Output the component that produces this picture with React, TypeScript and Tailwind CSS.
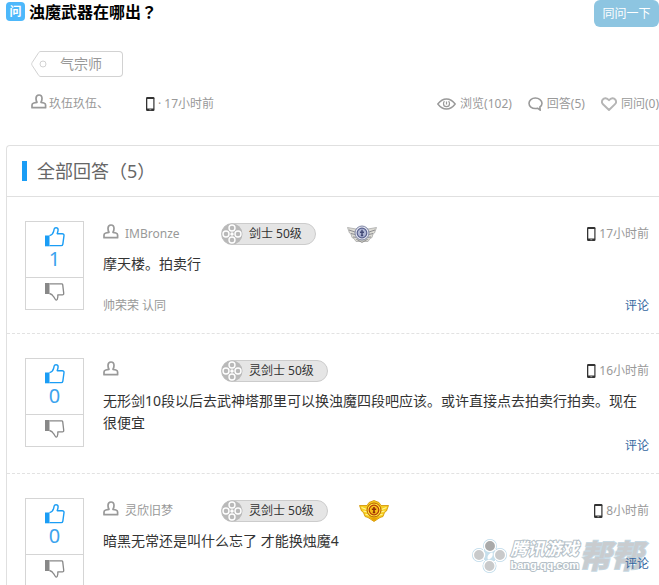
import clsx from 'clsx';

type Medal = 'silver' | 'gold';

interface Answer {
  id: number;
  name: string;
  role: string;
  medal?: Medal;
  time: string;
  votes: number;
  text: string;
  agree?: string;
}

const answers: Answer[] = [
  { id: 1, name: 'IMBronze', role: '剑士 50级', medal: 'silver', time: '17小时前', votes: 1, text: '摩天楼。拍卖行', agree: '帅荣荣 认同' },
  { id: 2, name: '', role: '灵剑士 50级', time: '16小时前', votes: 0, text: '无形剑10段以后去武神塔那里可以换浊魔四段吧应该。或许直接点去拍卖行拍卖。现在很便宜' },
  { id: 3, name: '灵欣旧梦', role: '灵剑士 50级', medal: 'gold', time: '8小时前', votes: 0, text: '暗黑无常还是叫什么忘了 才能换烛魔4' },
];

function UserIcon() {
  return (
    <svg className="h-[15px] w-4 shrink-0" viewBox="0 0 16 15" fill="none" stroke="#999" strokeWidth="1.7" strokeLinejoin="round">
      <path d="M8 1C5.900 1 5 2.400 5 4.400c0 1.700.4 2.900 1 3.900L2.800 9C1.600 9.300 1 10 1 11v2.700h13.600V11c0-1-.6-1.700-1.700-2L10 8.300c.6-1 1-2.200 1-3.900C11 2.400 10.100 1 8 1z" />
    </svg>
  );
}

function PhoneIcon() {
  return (
    <svg className="h-[14px] w-[9px] shrink-0" viewBox="0 0 9 14">
      <rect width="8.500" height="14" rx="1.2" fill="#333" />
      <rect x="1.300" y="2" width="6" height="9.500" fill="#fff" />
      <rect x="3.300" y="12.300" width="2" height="0.900" fill="#aaa" />
    </svg>
  );
}

function EyeIcon() {
  return (
    <svg className="h-3 w-[19px]" viewBox="0 0 19 12" fill="none" stroke="#999" strokeWidth="1.400">
      <path d="M.8 6C3.500 2.500 6.200 1 9.500 1s6 1.500 8.700 5c-2.700 3.500-5.400 5-8.700 5S3.500 9.500.8 6z" />
      <path d="M7.500 3.200C6.800 3.800 6.500 4.700 6.500 5.700c0 1.700 1.300 3 3 3s3-1.300 3-3c0-1-.3-1.900-1-2.500M9.500 3.500v3" strokeWidth="1.200" />
    </svg>
  );
}

function BubbleIcon() {
  return (
    <svg className="h-[14px] w-[15px]" viewBox="0 0 15 14" fill="none" stroke="#999" strokeWidth="1.600" strokeLinejoin="round">
      <path d="M7.300 1C3.800 1 1 3.300 1 6.300s2.800 5.200 6.300 5.200c.8 0 1.500-.1 2.200-.3l2.700 2-.3-3.200c1.300-.9 2.100-2.200 2.100-3.700C14 3.300 10.900 1 7.300 1z" />
    </svg>
  );
}

function HeartIcon() {
  return (
    <svg className="h-[14px] w-4" viewBox="0 0 16 14" fill="none" stroke="#b5b5b5" strokeWidth="1.900" strokeLinejoin="round">
      <path d="M8 13L2 7.200C.8 6 .7 4 1.700 2.600 3 .8 6 .6 8 3.300 10 .6 13 .8 14.300 2.600c1 1.400.9 3.400-.3 4.600L8 13z" />
    </svg>
  );
}

function ThumbUp() {
  return (
    <svg className="h-5 w-5" viewBox="0 0 20 20" fill="none">
      <rect y="8.500" width="4.500" height="10.800" fill="#1a9df5" />
      <path d="M4.500 8.700C7 8 8.300 6.200 8.700 4.200L9.200 1.800C9.400.9 10 .7 11 .7c1.400 0 2.100.8 2.100 2 0 1.500-.5 2.600-.9 4h5c1.200 0 1.900.8 1.800 1.900l-1.200 8.700c-.2 1-.8 1.300-1.600 1.300H4.500" stroke="#1a9df5" strokeWidth="1.400" strokeLinejoin="round" />
    </svg>
  );
}

function ThumbDown() {
  return (
    <svg className="h-[19px] w-5" viewBox="0 0 20 19" fill="none">
      <rect width="4.500" height="11" fill="#888" />
      <path d="M4.500.8h12.200c.6 0 .9.3 1 .8l1 8.600c.1 1.100-.3 1.700-1.300 1.700h-4.600c.2 1.500.1 3.200-.5 4.400-.5 1-1.300 1.100-1.900.2L8.600 13.700C7.700 12.100 6.500 11 4.500 10.500" stroke="#888" strokeWidth="1.300" strokeLinejoin="round" />
    </svg>
  );
}

function RoleIcon() {
  return (
    <svg className="size-[22px] shrink-0" viewBox="0 0 22 22">
      <circle cx="11" cy="11" r="10.500" fill="#b9b9b9" />
      <g fill="#b9b9b9" stroke="#fff" strokeWidth="1.400">
        <circle cx="11" cy="5" r="3" />
        <circle cx="17" cy="11" r="3" />
        <circle cx="11" cy="17" r="3" />
        <circle cx="5" cy="11" r="3" />
      </g>
      <path d="M11 8.500q.5 2 2.500 2.500-2 .5-2.500 2.500-.5-2-2.500-2.500 2-.5 2.500-2.500z" fill="#fff" />
    </svg>
  );
}

function SilverMedal() {
  return (
    <svg className="h-[18px] w-[30px]" viewBox="0 0 30 18" strokeLinejoin="round">
      <path d="M.5 2.500l8.500 1.500h12L29.500 2.500 27.500 8l-1.500 1-1 3.500-2 1-2 3H9l-2-3-2-1-1-3.500L2.500 8z" fill="#dddcd5" stroke="#aaa" strokeWidth=".8" />
      <path d="M2 5l6 2M4 8.500l4 1M6 12l3 .3M28 5l-6 2M26 8.500l-4 1M24 12l-3 .3" stroke="#85858a" strokeWidth=".9" />
      <path d="M9 14l6 3.500 6-3.500" fill="#c9c9bf" stroke="#888" strokeWidth=".8" />
      <circle cx="15" cy="8" r="7" fill="#e4e6ef" stroke="#8087a6" strokeWidth="1" />
      <circle cx="15" cy="8" r="4.800" fill="#b0b7d4" stroke="#58608f" strokeWidth="1.200" />
      <path d="M15 4.800v6.500M13 7.300h4M13.800 10.500h2.400" stroke="#414875" strokeWidth="1.400" />
    </svg>
  );
}

function GoldMedal() {
  return (
    <svg className="h-[22px] w-[30px]" viewBox="0 0 30 22" strokeLinejoin="round">
      <path d="M15 .5l5 2 2 3L29.500 5.500 27.500 11l-2 1.500-1.500 4-3 1-6 4-6-4-3-1-1.500-4-2-1.500L.5 5.500 8 5.500l2-3z" fill="#f8cf20" stroke="#cf8f00" strokeWidth=".8" />
      <path d="M2.500 7.500l5 2M4.500 11l3.500 1M6.500 14.500l4 .5M27.500 7.500l-5 2M25.500 11l-3.500 1M23.500 14.500l-4 .5" stroke="#fff59a" strokeWidth="1.200" />
      <path d="M9 16q6 4 12 0l-6 5.300z" fill="#e8a200" />
      <circle cx="15" cy="10" r="7" fill="#ffe13b" stroke="#b45e00" strokeWidth="1" />
      <circle cx="15" cy="10" r="4.800" fill="#f5bd1a" stroke="#b33909" strokeWidth="1.200" />
      <path d="M15 7v6M12.800 9.300h4.400M13.800 12.500h2.400" stroke="#8e2c05" strokeWidth="1.600" />
    </svg>
  );
}

function Watermark() {
  return (
    <div className="pointer-events-none absolute right-4 bottom-3 flex items-center font-bold text-[#c9cccf] italic">
      <svg className="h-[34px] w-[35px]" viewBox="0 0 35 34">
        <g fill="#fff" stroke="#bcd9e9" strokeWidth="2">
          <circle cx="18" cy="7" r="6" />
          <circle cx="28" cy="16" r="6" />
          <circle cx="17.500" cy="27" r="6" />
          <circle cx="7" cy="16" r="6" />
        </g>
        <path d="M12 9l11 1 5 7-10 10-9-9z" fill="#c6dfec" stroke="#fff" />
        <g fill="#c9cacb" stroke="#fff" strokeWidth="1.300">
          <circle cx="18" cy="7" r="5.600" fill="#aaa" />
          <circle cx="28" cy="16" r="5.600" />
          <circle cx="17.500" cy="27" r="5.600" />
          <circle cx="7" cy="16" r="5.600" />
        </g>
        <path d="M20.500 13.500c1 2.500-.5 6.500-4.500 7-1.500-2.500.5-6.500 4.500-7z" fill="#fff" />
      </svg>
      <div className="ml-1 text-white [-webkit-text-stroke:2px_#b4bfc7] [paint-order:stroke_fill]">
        <div className="text-[17px] leading-[18px]">腾讯游戏</div>
        <div className="font-['Liberation_Sans',sans-serif] text-[11px] leading-[14px] not-italic">bang.qq.com</div>
      </div>
      <div className="text-[32px] leading-8 [-webkit-text-stroke:2px_#c5d8e3] [paint-order:stroke_fill]">帮帮</div>
    </div>
  );
}

function AnswerItem({ answer }: { answer: Answer }) {
  return (
    <li className="flex gap-[19px] border-b border-dashed border-[#e2e2e2] pt-6 pr-[10px] pb-[17px] pl-[18px]">
      <div className="w-[59px] shrink-0 self-start border border-[#d5d5d5]">
        <button type="button" className="flex h-14 w-full flex-col items-center border-b border-[#d5d5d5] pt-[5px] text-xl leading-6 text-[#3ba3ee]">
          <ThumbUp />
          {answer.votes}
        </button>
        <button type="button" aria-label="踩" className="flex h-[31px] w-full justify-center pt-[5px]">
          <ThumbDown />
        </button>
      </div>

      <div className="min-w-0 flex-1">
        <div className="flex h-[26px] items-center text-xs text-[#999]">
          <div className="flex w-[118px] items-start gap-[6px]">
            <UserIcon />
            <span className="min-h-5 leading-5">{answer.name}</span>
          </div>
          <span className="flex h-[22px] items-center rounded-full border border-[#ccc] bg-[#e5e5e5] pr-[13px] text-[#333]">
            <span className="mr-[6px] -ml-px flex">
              <RoleIcon />
            </span>
            {answer.role}
          </span>
          {answer.medal && <span className="ml-[31px]">{answer.medal === 'gold' ? <GoldMedal /> : <SilverMedal />}</span>}
          <span className="ml-auto flex items-center gap-[3px]">
            <PhoneIcon />
            {answer.time}
          </span>
        </div>
        <p className="mt-[6px] text-sm leading-[22px] text-[#333]">{answer.text}</p>
        <div className={clsx('relative z-10 flex h-5 items-center text-xs text-[#999]', answer.agree ? 'mt-[21px]' : 'mt-0.5')}>
          <span>{answer.agree}</span>
          <a href="#comment" className="ml-auto text-[#3466a0]">
            评论
          </a>
        </div>
      </div>
    </li>
  );
}

export default function App() {
  return (
    <main className="relative h-screen overflow-hidden bg-white font-['Noto_Sans','Noto_Sans_CJK_SC',sans-serif]">
      <header className="flex items-start justify-between pl-[6px]">
        <div className="flex items-center gap-1">
          <span className="flex size-[19px] items-center justify-center rounded bg-[#4db8fb] text-xs font-bold text-white">问</span>
          <h1 className="text-base leading-[22px] font-bold text-black">
            浊魔武器在哪出
            <span lang="zh-TW" className="font-['Noto_Sans_CJK_TC',sans-serif]">？</span>
          </h1>
        </div>
        <button type="button" className="h-[27px] w-[65px] rounded-md bg-[#8dc5e1] text-xs text-white">
          同问一下
        </button>
      </header>

      <div className="mt-6 pl-[31px]">
        <a href="#tag" className="flex h-[26px] w-[92px] items-center text-sm text-[#999]">
          <svg className="h-[26px] w-[18px]" viewBox="0 0 18 26" fill="none" stroke="#d2d2d2">
            <path d="M18 .5H10C8.500.5 8 1 7.300 2.200L1.200 11.500c-.7 1.200-.7 1.800 0 3l6.100 9.300c.7 1.200 1.200 1.700 2.700 1.700h8" />
            <circle cx="12" cy="13" r="3" />
          </svg>
          <span className="flex h-full flex-1 items-center rounded-r-sm border border-l-0 border-[#d2d2d2] pl-[11px]">气宗师</span>
        </a>
      </div>

      <div className="mt-[17px] flex h-5 items-center pl-[31px] text-xs text-[#999]">
        <span className="flex w-[115px] items-start gap-[2px] leading-5">
          <UserIcon />
          玖伍玖伍、
        </span>
        <span className="flex items-center gap-[3px]">
          <PhoneIcon />
          <span>· 17小时前</span>
        </span>
        <div className="ml-auto flex items-center gap-4">
          <span className="flex items-center gap-1">
            <EyeIcon />
            浏览(102)
          </span>
          <span className="flex items-center gap-1">
            <BubbleIcon />
            回答(5)
          </span>
          <span className="flex items-center gap-1">
            <HeartIcon />
            同问(0)
          </span>
        </div>
      </div>

      <section className="mt-[31px] ml-[6px] rounded-tl border-t border-l border-[#e0e0e0]">
        <div className="flex h-[51px] items-center gap-[10px] border-b border-[#e0e0e0] pl-[15px]">
          <span className="h-5 w-[5px] bg-[#1a9df5]" />
          <h2 className="text-lg text-[#666]">全部回答（5）</h2>
        </div>
        <ul>
          {answers.map((answer) => (
            <AnswerItem key={answer.id} answer={answer} />
          ))}
        </ul>
      </section>

      <Watermark />
    </main>
  );
}
